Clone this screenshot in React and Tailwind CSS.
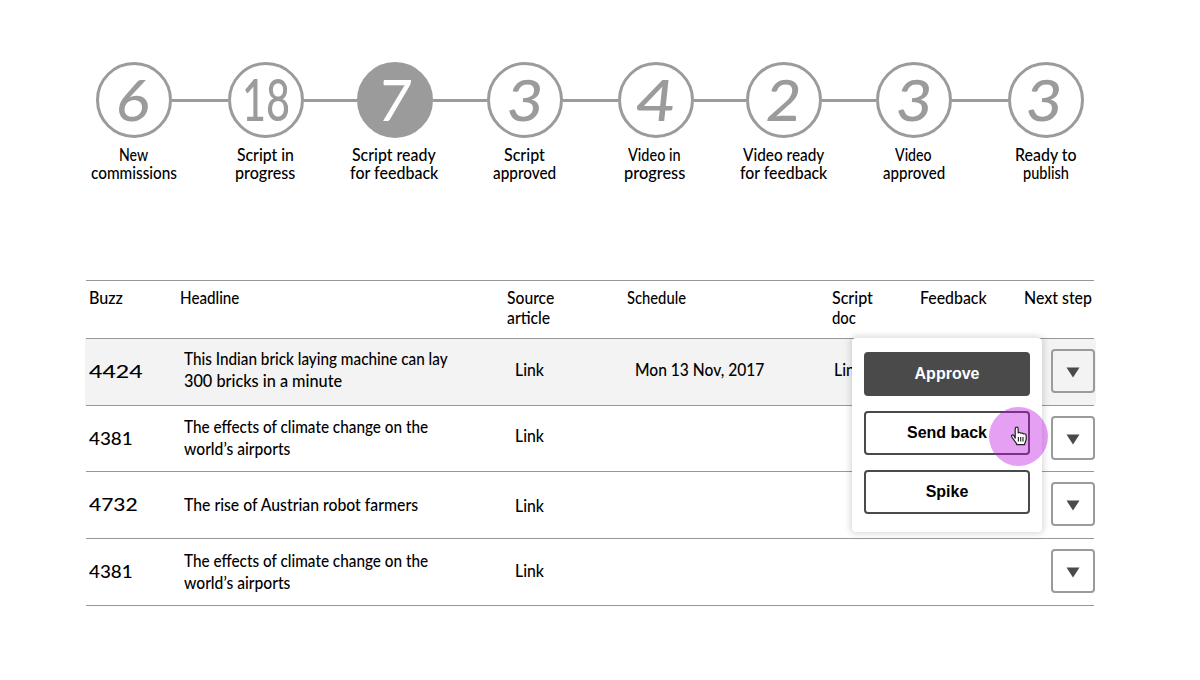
import { useLayoutEffect, useRef, useState } from 'react'
import clsx from 'clsx'

const steps = [
  { count: '6', digits: 34, lines: [['New', 29], ['commissions', 86]], pad: 'pr-px' },
  { count: '18', digits: 48, lines: [['Script in', 57], ['progress', 60]], line: 'w-14', upright: true, pad: 'pr-0.5' },
  { count: '7', digits: 32, lines: [['Script ready', 84], ['for feedback', 88]], line: 'w-[53px]', active: true, pad: 'pr-0.5' },
  { count: '3', digits: 35, lines: [['Script', 41], ['approved', 63]], line: 'w-[54px]', pad: 'pr-px' },
  { count: '4', digits: 38, lines: [['Video in', 53], ['progress', 61]], line: 'w-[55px]', pad: 'pr-1' },
  { count: '2', digits: 34, lines: [['Video ready', 81], ['for feedback', 87]], line: 'w-[52px]', pad: 'pr-px' },
  { count: '3', digits: 35, lines: [['Video', 37], ['approved', 62]], line: 'w-[54px]', pad: 'pr-px' },
  { count: '3', digits: 35, lines: [['Ready to', 62], ['publish', 46]], line: 'w-14', pad: 'pr-px', shift: 'pr-1' },
]

const columns = [
  { lines: [['Buzz', 34]], width: 'w-[91px]' },
  { lines: [['Headline', 59]], width: 'w-[327px]' },
  { lines: [['Source', 47], ['article', 43]], width: 'w-[120px]' },
  { lines: [['Schedule', 59]], width: 'w-[205px]' },
  { lines: [['Script', 41], ['doc', 24]], width: 'w-[88px]' },
  { lines: [['Feedback', 67]], width: 'w-[104px]' },
  { lines: [['Next step', 68]], width: 'w-[70px]' },
]

const rows = [
  {
    buzz: ['4424', 54],
    headline: [['This Indian brick laying machine can lay', 264], ['300 bricks in a minute', 158]],
    schedule: ['Mon 13 Nov, 2017', 129],
    doc: true,
    active: true,
    height: 'h-[67px]',
    headlinePad: 'pt-2',
    linkPad: 'pt-[19px]',
  },
  {
    buzz: ['4381', 44],
    headline: [['The effects of climate change on the', 244], ['world’s airports', 106]],
    height: 'h-[66px]',
    headlinePad: 'pt-[9px]',
    linkPad: 'pt-[18px]',
  },
  {
    buzz: ['4732', 49],
    headline: [['The rise of Austrian robot farmers', 234]],
    height: 'h-[67px]',
    headlinePad: 'pt-[21px]',
    linkPad: 'pt-[22px]',
  },
  {
    buzz: ['4381', 44],
    headline: [['The effects of climate change on the', 244], ['world’s airports', 106]],
    height: 'h-[67px]',
    headlinePad: 'pt-[10px]',
    linkPad: 'pt-5',
  },
]

// Condenses or widens a line of text to the given width
function FitText({ text, width, className }) {
  const ref = useRef(null)
  const [scale, setScale] = useState(1)

  useLayoutEffect(() => {
    setScale(width / ref.current.offsetWidth)
  }, [text, width])

  return (
    <span className={clsx('block whitespace-nowrap', className)} style={{ width }}>
      <span ref={ref} className="inline-block origin-left" style={{ transform: `scaleX(${scale})` }}>
        {text}
      </span>
    </span>
  )
}

function Lines({ lines }) {
  return lines.map(([text, width]) => <FitText key={text} text={text} width={width} />)
}

function Step({ step }) {
  return (
    <div className="flex w-[76px] shrink-0 flex-col items-center">
      <div
        className={clsx(
          'flex h-[76px] w-[76px] shrink-0 items-center justify-center rounded-full border-3 border-[#9b9b9b] pb-0.5 text-[57px] leading-[68px]',
          step.active ? 'bg-[#9b9b9b] text-white' : 'text-[#9b9b9b]',
          step.shift,
        )}
      >
        <FitText text={step.count} width={step.digits} className={step.upright ? '' : '-skew-x-6'} />
      </div>
      <div className={clsx('mt-[7px] flex flex-col items-center text-[18px] leading-[18px]', step.pad)}>
        <Lines lines={step.lines} />
      </div>
    </div>
  )
}

function ActionMenu() {
  const button = 'flex h-11 w-full items-center justify-center rounded border-2 border-[#4a4a4a] pb-px text-base font-bold'
  return (
    <div className="absolute left-[852px] top-[338px] flex h-[194px] w-[190px] flex-col gap-[15px] rounded bg-white px-3 pt-3.5 font-['Liberation_Sans',sans-serif] shadow-[0_0_6px_2px_rgba(0,0,0,0.14)]">
      <button type="button" className={clsx(button, 'bg-[#4a4a4a] text-white')}>Approve</button>
      <button type="button" className={clsx(button, 'bg-white')}>Send back</button>
      <button type="button" className={clsx(button, 'bg-white')}>Spike</button>
    </div>
  )
}

function Pointer() {
  return (
    <div className="absolute left-[989px] top-[407px] h-[59px] w-[59px] rounded-full bg-[#bd10e0]/40">
      <svg viewBox="0 0 18 20" className="absolute left-[21px] top-[19px] h-5 w-[18px]" aria-hidden>
        <path
          d="M5.2 12.2V3C5.2 .6 8.2 .6 8.2 3V7C8.8 6.2 10.5 6.4 10.9 7.4C11.7 6.7 13.1 7 13.5 8C14.6 7.4 16.2 8 16.2 9.6V13C16.2 15 14.8 16 14.6 18.6H6.8C6.5 16.4 3.5 14.3 1.7 10.8C1 9.2 2.7 8.2 4 9.7Z"
          fill="white"
          stroke="#222"
          strokeWidth="1.2"
          strokeLinejoin="round"
        />
        <path d="M8.4 11V15.5M10.7 11V15.5M13 11V15.5" stroke="#222" strokeWidth="1.1" />
      </svg>
    </div>
  )
}

export default function App() {
  return (
    <div className="relative h-[680px] w-[1200px] overflow-hidden bg-white font-['Lato',sans-serif] font-medium text-black">
      <div className="flex h-[280px] items-start pl-24 pt-[62px]">
        {steps.map((step, i) => (
          <div key={i} className="flex shrink-0">
            {step.line ? <div className={clsx('mt-[37px] h-[3px] bg-[#9b9b9b]', step.line)} /> : null}
            <Step step={step} />
          </div>
        ))}
      </div>

      <div className="ml-[86px] w-[1008px] border-b border-[#979797] text-[18px]">
        <div className="flex h-[58px] border-t border-[#979797] pl-[3px] pt-1.5 leading-5">
          {columns.map((col) => (
            <div key={col.lines[0][0]} className={clsx('shrink-0', col.width)}>
              <Lines lines={col.lines} />
            </div>
          ))}
        </div>

        {rows.map((row, i) => (
          <div key={i} className={clsx('border-t border-[#979797] leading-[22px]', row.height)}>
            <div className={clsx('-ml-px flex h-full w-[1011px] pl-1', row.active && 'bg-[#f3f3f3]')}>
              <div className="w-[95px] shrink-0 pt-[21px]">
                <FitText text={row.buzz[0]} width={row.buzz[1]} />
              </div>
              <div className={clsx('w-[331px] shrink-0', row.headlinePad)}>
                <Lines lines={row.headline} />
              </div>
              <div className={clsx('w-[120px] shrink-0', row.linkPad)}>
                <FitText text="Link" width={29} />
              </div>
              <div className={clsx('w-[199px] shrink-0', row.linkPad)}>
                {row.schedule ? <FitText text={row.schedule[0]} width={row.schedule[1]} /> : null}
              </div>
              <div className={clsx('w-[217px] shrink-0', row.linkPad)}>
                {row.doc ? <FitText text="Link" width={29} /> : null}
              </div>
              <button
                type="button"
                aria-label="Next step"
                className="mt-2.5 flex h-11 w-11 shrink-0 items-center justify-center rounded border-2 border-[#9b9b9b]"
              >
                <svg viewBox="0 0 14 11" className="mt-0.5 h-[11px] w-3.5" aria-hidden>
                  <path d="M.5 .5H13.5L7 10.5Z" fill="#4a4a4a" />
                </svg>
              </button>
            </div>
          </div>
        ))}
      </div>

      <ActionMenu />
      <Pointer />
    </div>
  )
}
